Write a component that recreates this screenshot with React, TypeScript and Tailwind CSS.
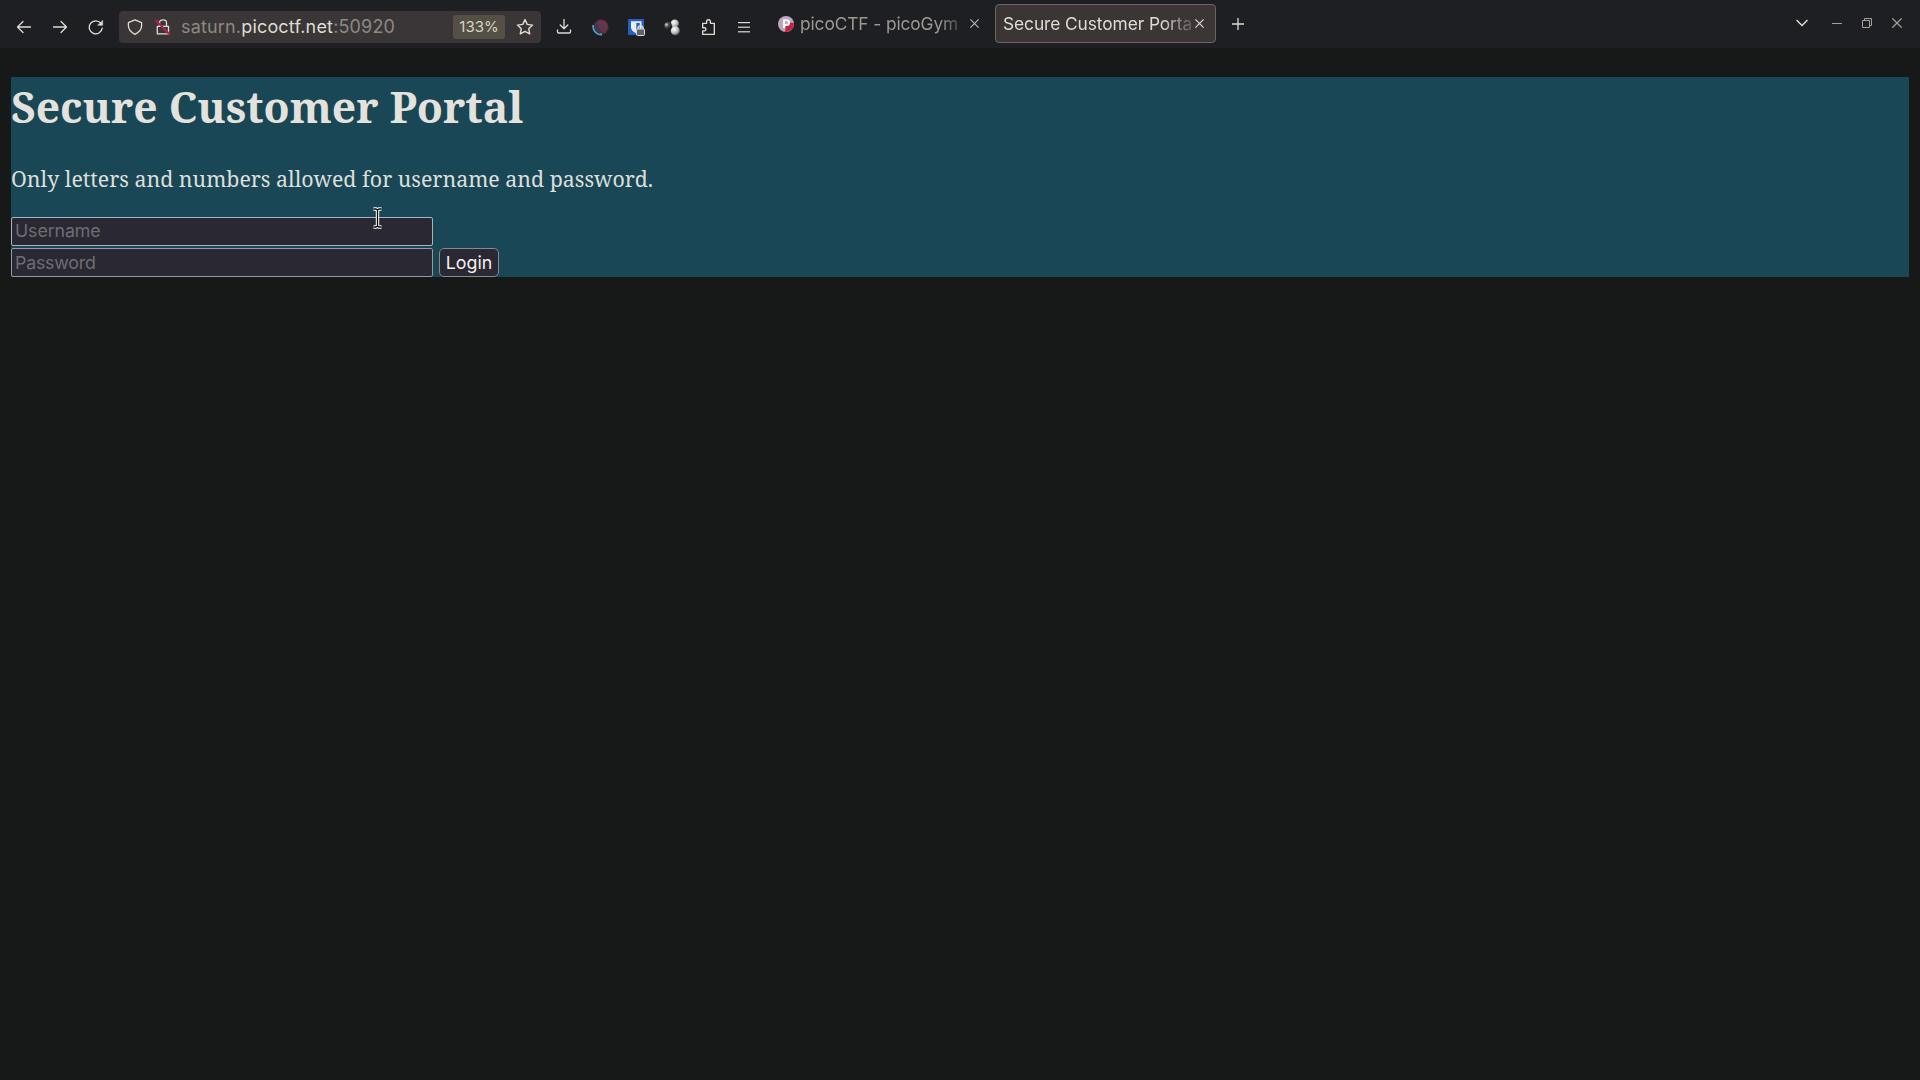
import React from 'react';

const Cell = ({ children }: { children: React.ReactNode }) => (
  <div className="flex h-8 w-9 shrink-0 items-center justify-center">{children}</div>
);

type IconProps = { size?: number; width?: number; className?: string; children: React.ReactNode };

/* Toolbar glyphs are drawn on a 16-unit grid. */
const Icon = ({ size = 16, width = 1.3, className = '', children }: IconProps) => (
  <svg
    width={size}
    height={size}
    viewBox="0 0 16 16"
    fill="none"
    stroke="currentColor"
    strokeWidth={width}
    strokeLinecap="round"
    strokeLinejoin="round"
    className={`shrink-0 ${className}`}
  >
    {children}
  </svg>
);

const AddressBar = () => (
  <div className="flex h-8 w-[422px] items-center rounded-[4px] bg-[#3a3637] pl-2">
    <Icon size={16}>
      <path d="M8 .8 14.6 3.6v3.2c0 3.8-2.8 6.6-6.6 8.5C4.2 13.4 1.4 10.6 1.4 6.800V3.6z" />
    </Icon>
    <Icon size={16} className="ml-3">
      <path d="M4.5 7V3.600C4.500 2 6 .8 8 .8s3.500 1.200 3.500 2.800V7M2.300 7.300h11.200v7.600H2.300z" />
      <path d="M1.200 1.700 14 14.800" stroke="#b0224f" strokeWidth="2" />
    </Icon>
    <span className="ml-[10px] w-[272px] whitespace-nowrap text-[18px] leading-8 tracking-[0.17px] text-[#8d8983]">
      saturn.<span className="text-[#dfdcd2]">picoctf.net</span>:50920
    </span>
    <span className="flex h-6 w-[52px] shrink-0 items-center justify-center rounded-[3px] bg-[#545045] text-[15px] text-[#d6d3c4]">
      133%
    </span>
    <Icon size={18} className="ml-[11px]" width={1.25}>
      <path d="m8 1.400 2 4.300 4.700.6-3.400 3.200.9 4.700L8 11.900l-4.200 2.300.9-4.700L1.300 6.300 6 5.700z" />
    </Icon>
  </div>
);

const Extensions = () => (
  <div className="ml-[5px] flex">
    <Cell>
      <Icon>
        <path d="M8 .500v9M4.200 6 8 9.700 11.800 6M1.500 11v1.700c0 .8.500 1.300 1.300 1.300h10.400c.8 0 1.300-.5 1.300-1.300V11" />
      </Icon>
    </Cell>
    <Cell>
      <svg width="17" height="17" viewBox="0 0 17 17">
        <circle cx="9" cy="8" r="7.600" fill="#4c3342" />
        <path d="M6 2.500c3-2 8-.5 9 3s-1 5-2 7-4-1-5-3-4-5-2-7z" fill="#73304a" />
        <path d="M5.500 5.500h3v2.500h3v3" fill="none" stroke="#3b4268" strokeWidth="1.500" />
        <path d="M1.200 6C.5 11 4 15.500 10 15.600" fill="none" stroke="#5da0cd" strokeWidth="1.700" />
        <path d="M2.500 8C3 11 5 13.500 8 14.300" fill="none" stroke="#253d70" strokeWidth="1.300" />
      </svg>
    </Cell>
    <Cell>
      <svg width="17" height="17" viewBox="0 0 17 17">
        <rect width="16" height="16" rx="1" fill="#2660c4" />
        <path d="M3 2.200h10.500v6c0 3-2.500 5-5.200 6.300C5.500 13 3 11 3 8.200z" fill="#e9eef6" />
        <path d="M8.300 4h3.500v4.200c0 1.700-1.500 3.200-3.500 4.300z" fill="#2660c4" />
        <path d="M10 10.500V9.600a2.500 2.500 0 0 1 5 0v.9" fill="none" stroke="#dad9dd" strokeWidth="1.500" />
        <rect x="8.500" y="10" width="8" height="6.500" rx="1" fill="#626167" stroke="#dad9dd" />
      </svg>
    </Cell>
    <Cell>
      <svg width="16" height="17" viewBox="0 0 16 17">
        <defs>
          <radialGradient id="pale" cx=".35" cy=".3" r=".75">
            <stop stopColor="#fff" />
            <stop offset=".55" stopColor="#c4c4c4" />
            <stop offset="1" stopColor="#555" />
          </radialGradient>
          <radialGradient id="dark" cx=".3" cy=".35" r=".7">
            <stop stopColor="#ddd" />
            <stop offset=".4" stopColor="#555" />
            <stop offset="1" stopColor="#151515" />
          </radialGradient>
        </defs>
        <circle cx="10.800" cy="4.800" r="4.200" fill="url(#pale)" />
        <circle cx="11.300" cy="11.800" r="4.500" fill="url(#pale)" />
        <circle cx="4" cy="6.800" r="3.800" fill="url(#dark)" />
      </svg>
    </Cell>
    <Cell>
      <Icon size={17} width={1.25}>
        <path d="M6.200 4.100V2.500a1.800 1.800 0 0 1 3.600 0v1.600h3.700v10.300H2.500v-3.200h1.600a1.500 1.500 0 0 0 0-3H2.500V4.100z" />
      </Icon>
    </Cell>
    <Cell>
      <svg width="12" height="11" viewBox="0 0 12 11" fill="#dfdcd2">
        <rect y="0" width="12" height="1.200" />
        <rect y="4.600" width="12" height="1.200" />
        <rect y="9.200" width="12" height="1.200" />
      </svg>
    </Cell>
  </div>
);

const Cross = ({ size = 9 }: { size?: number }) => (
  <svg width={size} height={size} viewBox="0 0 8 8" fill="none" stroke="currentColor" strokeWidth="1" className="shrink-0">
    <path d="m.3.3 7.400 7.400M7.700.3.3 7.700" />
  </svg>
);

const Tabs = () => (
  <div className="ml-4 flex h-[39px] items-center text-[17.33px] leading-[26px]">
    <div className="flex h-full w-[217px] items-center text-[#9c9992]">
      <svg width="16" height="16" viewBox="0 0 16 16" className="shrink-0">
        <circle cx="8" cy="8" r="8" fill="#b9aabd" />
        <path d="M7 15.900A8 8 0 0 0 15.900 7L12 6.500 8 9z" fill="#c8203f" />
        <path d="M6 12V4.200h2.600a2.400 2.400 0 0 1 0 4.900H6" fill="none" stroke="#f7f2f5" strokeWidth="2" />
      </svg>
      <span className="ml-[6px] w-[165px] whitespace-nowrap tracking-[-0.1px] mask-r-from-84% mask-r-to-[103%]">
        picoCTF - picoGym
      </span>
      <span className="ml-[5px] text-[#b8b6b0]">
        <Cross />
      </span>
    </div>
    <div className="flex h-full w-[221px] items-center rounded-[4px] border border-[#6a6765] bg-[#3b3635] pl-[7px] text-[#dfdcd2]">
      <span className="w-[189px] whitespace-nowrap tracking-[-0.08px] mask-r-from-84% mask-r-to-[104%]">
        Secure Customer Porta
      </span>
      <span className="ml-[3px]">
        <Cross />
      </span>
    </div>
    <svg width="12" height="12" viewBox="0 0 12 12" stroke="currentColor" strokeWidth="1.300" className="ml-4 mt-px text-[#dfdcd2]">
      <path d="M6 0v12M0 6h12" />
    </svg>
  </div>
);

const WindowControls = () => (
  <div className="ml-auto mr-[18px] flex h-[38px] items-center text-[#a3a09c]">
    <svg width="12" height="8" viewBox="0 0 12 8" fill="none" stroke="#dfdcd2" strokeWidth="1.500" className="mr-6">
      <path d="m.5 1 5.500 5.500L11.500 1" />
    </svg>
    <div className="mr-5 h-px w-[10px] bg-current" />
    <svg width="10" height="10" viewBox="0 0 10 10" fill="none" stroke="currentColor" className="mr-5">
      <path d="M.5 2.500h7v7h-7zM2.500 2.500v-2h7v7h-2" />
    </svg>
    <Cross size={10} />
  </div>
);

export default function App() {
  return (
    <div className="h-[1080px] w-[1920px] overflow-hidden bg-[#171918] font-['Inter',sans-serif]">
      <header className="flex h-12 items-start bg-[#1d1f22] text-[#dfdcd2]">
        <div className="mt-[11px] flex pl-[6px]">
          <Cell>
            <Icon>
              <path d="M1.500 8h13M7 2.500 1.500 8 7 13.500" />
            </Icon>
          </Cell>
          <Cell>
            <Icon>
              <path d="M1.500 8h13M9 2.500 14.500 8 9 13.500" />
            </Icon>
          </Cell>
          <Cell>
            <Icon>
              <path d="M14.200 9.200A6.500 6.500 0 1 1 12.800 4.200" />
              <path d="M14.700 1.500v4.800H9.900z" fill="currentColor" strokeWidth=".5" />
            </Icon>
          </Cell>
          <div className="ml-[5px]">
            <AddressBar />
          </div>
          <Extensions />
        </div>
        <div className="mt-1">
          <Tabs />
        </div>
        <div className="ml-auto mt-1">
          <WindowControls />
        </div>
      </header>

      <main className="mx-[11px] mt-[29px] h-[200px] bg-[#1a4755] text-[#e4e2dc]">
        <h1 className="h-[58px] whitespace-nowrap pt-px font-['Noto_Serif','DejaVu_Serif',serif] text-[42.67px] font-bold leading-[58px]">
          Secure Customer Portal
        </h1>
        <p className="mt-[29px] h-[29px] whitespace-nowrap font-['Noto_Serif','DejaVu_Serif',serif] text-[21.33px] leading-[29px] text-[#dcdfdc]">
          Only letters and numbers allowed for username and password.
        </p>
        <form className="mt-6 flex flex-col gap-[2px] text-[17.78px]">
          <div className="relative w-[422px]">
            <input
              placeholder="Username"
              className="block h-[29px] w-full rounded-[2px] border border-[#a6b4bb] bg-[#2a2833] pb-[2px] pl-[3px] pr-1 tracking-[-0.1px] placeholder:text-[#706d71]"
            />
            <svg width="11" height="22" viewBox="0 0 11 22" className="absolute left-[361px] top-[-10px]">
              <path d="M1.500 2h2.500l1.500 1 1.500-1h2.500M5.500 3v16M1.500 20h2.500l1.500-1 1.500 1h2.500" fill="none" stroke="#fff" strokeWidth="3.400" />
              <path d="M1.500 2h2.500l1.500 1 1.500-1h2.500M5.500 3v16M1.500 20h2.500l1.500-1 1.500 1h2.500" fill="none" stroke="#080808" strokeWidth="1.300" />
            </svg>
          </div>
          <div className="flex gap-[6px]">
            <input
              placeholder="Password"
              className="block h-[29px] w-[422px] rounded-[2px] border border-[#959a9e] bg-[#2a2833] pl-[3px] pr-1 tracking-[-0.2px] placeholder:text-[#706d71]"
            />
            <button type="button" className="h-[29px] w-[60px] rounded-[5px] border border-[#858990] bg-[#2a2833] pt-px text-[#f2f1ee]">
              Login
            </button>
          </div>
        </form>
      </main>
    </div>
  );
}
